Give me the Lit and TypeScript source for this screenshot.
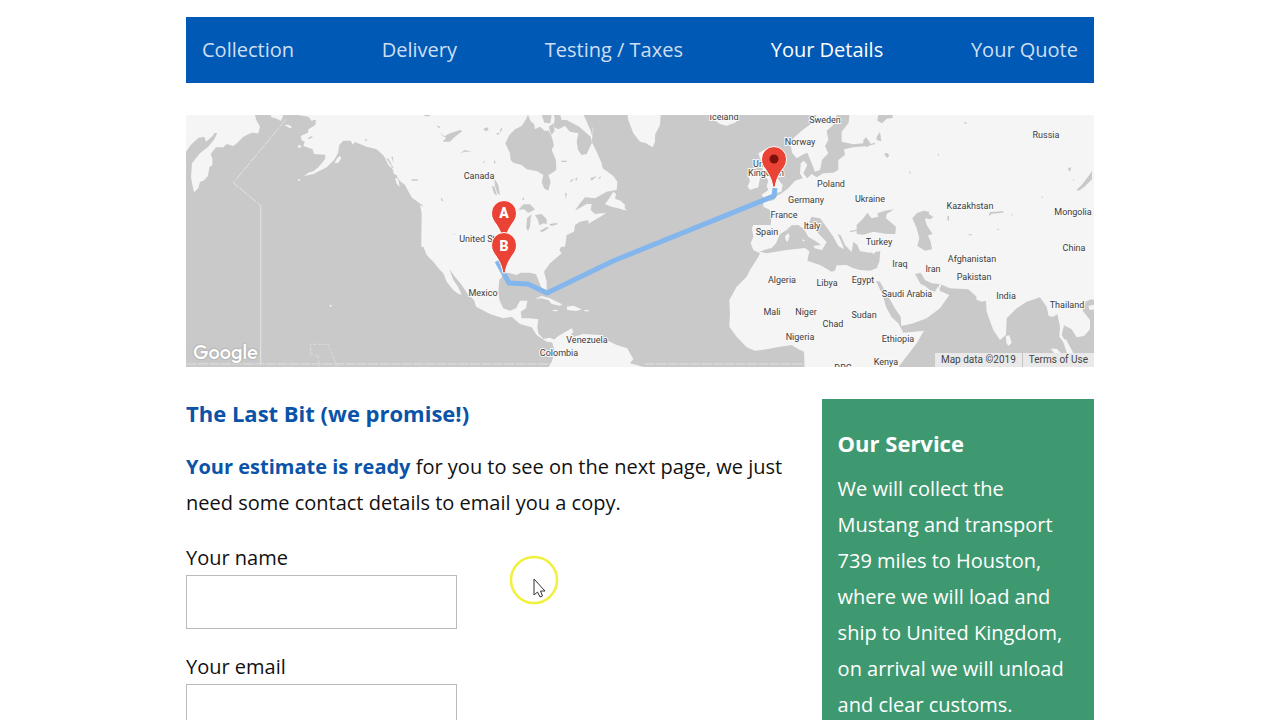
import { LitElement, html, css, svg } from "lit";
import { customElement, state } from "lit/decorators.js";
import { classMap } from "lit/directives/class-map.js";

const steps = ["Collection", "Delivery", "Testing / Taxes", "Your Details", "Your Quote"];

type Label = [text: string, x: number, y: number];

const labels: Label[] = [
  ["Canada", 293, 64], ["United States", 300, 127], ["Mexico", 297, 181],
  ["Venezuela", 401, 228], ["Colombia", 373, 241],
  ["Iceland", 538, 5], ["Sweden", 639, 8], ["Norway", 614, 30],
  ["United", 580, 52], ["Kingdom", 580, 61],
  ["Poland", 645, 72], ["Germany", 620, 88], ["France", 598, 103],
  ["Spain", 581, 120], ["Italy", 626, 114], ["Ukraine", 684, 87],
  ["Turkey", 693, 130], ["Kazakhstan", 784, 94], ["Russia", 860, 23],
  ["Mongolia", 887, 100], ["China", 888, 136], ["Algeria", 596, 168],
  ["Libya", 641, 171], ["Egypt", 677, 168], ["Iraq", 714, 152],
  ["Iran", 747, 157], ["Afghanistan", 786, 147], ["Pakistan", 788, 165],
  ["India", 820, 184], ["Saudi Arabia", 721, 182], ["Thailand", 881, 193],
  ["Mali", 586, 200], ["Niger", 620, 200], ["Sudan", 678, 203],
  ["Chad", 647, 212], ["Nigeria", 614, 225], ["Ethiopia", 712, 227],
  ["Kenya", 700, 250], ["DRC", 657, 256],
];

@customElement("route-map")
export class RouteMap extends LitElement {
  static styles = css`
    :host { display: block; position: relative; height: 252px; background: #c9c9c9; overflow: hidden; }
    .chart { display: block; width: 100%; height: 100%; }
    .land { fill: #f5f5f5; }
    .water { fill: #c9c9c9; }
    .thin { fill: none; stroke: #c9c9c9; stroke-width: 4; }
    .grid { fill: none; stroke: #dedede; stroke-width: 4; }
    .dash { fill: none; stroke: #e2e2e2; stroke-width: 3; stroke-dasharray: 30 4; }
    .faint { fill: none; stroke: #dadada; stroke-width: 3; stroke-dasharray: 10 4; }
    .route { fill: none; stroke: #84b6ee; stroke-width: 5; stroke-linejoin: round; }
    .label { font: 400 9px Roboto, sans-serif; fill: #3c3c3c; stroke: #f8f8f8; stroke-width: 2; paint-order: stroke; text-anchor: middle; }
    .pin { fill: #ea4335; stroke: #fff; stroke-width: 1; }
    .hole { fill: #7e100b; }
    .letter { font: 900 14px Roboto, sans-serif; fill: #fff; text-anchor: middle; }
    .brand { position: absolute; left: 7px; bottom: 3px; font: 500 20px/24px "Outfit", Lato, sans-serif; color: #fff; text-shadow: 0 0 2px #888; }
    .credit { position: absolute; right: 0; bottom: 0; display: flex; font: 10px/14px Roboto, sans-serif; color: #444; background: #e9e9e9; }
    .credit span, .credit a { padding: 0 6px; color: inherit; text-decoration: none; }
    .credit a { border-left: 1px solid #c4c4c4; }
  `;

  private pin(x: number, y: number, mark: unknown) {
    return svg`<g transform="translate(${x} ${y})">
      <path class="pin" d="M-1.200 0C-1.800-6-4-11-8-17C-10.500-20.500-12.500-23-12.500-28A12.500 12.500 0 0 1 12.500-28C12.500-23 10.500-20.500 8-17C4-11 1.800-6 1.200 0Z"/>
      ${mark}
    </g>`;
  }

  render() {
    return html`
      <svg class="chart" viewBox="0 0 908 252" preserveAspectRatio="xMidYMid slice" role="img" aria-label="Route map">
        <g transform="scale(.33333) translate(-18 -15)">
          <g>
            <path class="land" d="M0 0H222L228 28 240 50 235 70 215 68 190 80 172 98 160 108 140 102 130 112 108 112 92 132 97 145 97 165 88 172 84 198 70 212 60 215 55 235 42 247 36 220 33 200 36 160 60 130 85 110 103 88 112 68 103 70 98 78 78 95 73 80 55 84 32 105 20 123 0 130Z"/>
            <path class="land" d="M262 0L275 22 290 26 303 33 310 15V0ZM313 45L325 44 337 51 330 55ZM353 107l6-3 6 7-9 3ZM353 210l5-3 4 4-7 2Z"/>
            <path class="land" d="M400 0L402 22 392 30 408 30 406 45 385 58 384 68 362 78 365 90 374 96 370 108 398 118 402 132 436 134 435 148 415 172 400 184 385 188 372 198 400 192 440 172 462 150 474 130 478 105 490 92 512 92 518 104 525 96 560 110 590 118 612 138 625 165 640 180 650 200 662 215 690 235 690 250 720 275 760 320V0Z"/>
            <path class="land" d="M352 0L358 16 385 20 396 34 404 24V0Z"/>
            <path class="land" d="M463 160L472 144 480 138 484 145 475 158ZM645 203L655 208 659 230 650 222Z"/>
            <path class="thin" d="M622 145l12 20M636 140l6 18M634 168l14 12M650 182v18M694 211h24M555 88l6 3M385 86l12-6"/>
            <path class="dash" d="M318 28L160 218 240 285"/>
            <path class="grid" d="M242 285V762"/>
            <path class="dash" d="M20 762H1110"/>
            <path class="faint" d="M392 738V703H445L472 770M392 725l12 12 10-2 4 34"/>
            <circle class="land" cx="452" cy="587" r="3"/>
            <path class="dash" d="M1395 762H1872"/>
          </g>
          <g transform="translate(660)">
            <path class="land" d="M-20 0H570L572 30 580 60 575 95 590 125 605 160 608 175 640 198 652 215 650 240 620 245 585 265 555 262 540 280 525 302 560 282 575 282 572 300 585 312 618 308 605 318 575 335 566 342 565 330 540 335 525 345 522 365 500 375 495 410H64L65 310 60 285 35 262 20 235 5 205-20 190Z"/>
            <path class="land" d="M615 283L630 262 640 245 648 252 645 266 662 272 675 285 672 300 655 295 635 290Z"/>
            <path class="water" d="M316 100L328 75 345 58 365 48 378 28 384 14 392 34 402 42 405 58 420 50 434 62 446 62 455 80 462 105 455 120 468 150 469 180 455 190 445 195 452 215 445 242 432 235 425 215 430 195 410 183 380 178 365 165 340 158 332 150 330 130Z"/>
            <path class="water" d="M462 12L464 30 460 50 475 58 495 48 510 65 535 70 530 95 534 120 545 135 560 132 576 98 572 80 558 68 538 50 515 38 500 30 485 30 480 12ZM425 14l8 24 18 2 4-24ZM446 50l14-10 4 22-10 14ZM550 12l22 50 6 20V12ZM410 60l12 8-6 10-10-6Z"/>
            <path class="water" d="M118 65L130 80 150 70 180 60 187 63 165 80 150 95 128 95 138 84ZM180 130L195 120 215 125 195 125ZM283 205L295 225 300 255 292 250 285 228ZM275 228l8 2 8 26-8-4ZM250 56l12-4 4 8-10 4ZM248 158l6-8-2 10ZM70 14h20v5H75ZM365 268l6-6 2 8Z"/>
            <path class="water" d="M355 300L370 283 390 283 405 298 395 304 385 308 372 298ZM379 355L381 325 395 313 392 325 390 350 384 363ZM405 315L425 312 440 328 440 342 430 340 418 346 414 330ZM418 363L440 351 448 353 428 366ZM447 343l20-4 8 3-20 6ZM510 215l6-8 5 2-9 8ZM525 207l8-5-3 10ZM570 205l20-7-15 14ZM595 205l8-8-3 10ZM495 250h6l-4 18Z"/>
            <path class="thin" d="M30 262L68 288M35 210h18M484 154h16M124 265l4 8M162 372l4 6M112 48l8 5M290 72l8-2M305 55l-4 10M284 152v8"/>
          </g>
          <g transform="translate(660 390)">
            <path class="land" d="M64-15L68 15 80 45 100 65 120 90 130 100 140 125 160 150 172 160 185 165 175 142 160 120 148 88 165 110 185 135 205 165 222 180 228 200 270 222 310 235 335 230 360 252 395 262 410 285 440 305 462 308 466 300 450 293 430 297 415 280 412 262 415 238 390 235 365 235 362 215 378 205 382 182 360 182 348 205 330 212 310 205 298 180 295 150 298 120 310 105 325 98 350 105 362 98 390 98 408 103 415 120 425 145 440 150 440 125 432 95 450 70 485 40 478 30 490 10 495-20Z"/>
            <path class="land" d="M405 176L425 168 450 175 470 185 487 193 480 197 455 192 445 180 425 175ZM500 200L520 197 545 208 530 213 502 210ZM458 210l14-1 2 4-14 1ZM553 210h13v4h-13Z"/>
            <path class="land" d="M438 395L455 365 465 335 456 305 470 292 480 285 515 265 520 275 500 300 510 290 520 290 550 282 600 285 620 300 650 315 682 325 700 358 690 370 735 382 740 400Z"/>
          </g>
          <g transform="translate(1320)">
            <path class="land" d="M20 0L25 30 40 70 60 95 75 98 98 112 105 95 105 75 120 45 122 15V0ZM268 12L275 25 300 42 320 47 345 38 356 28 350 12ZM-5 272l14 10 2 6 9 14-16-6-9-6Z"/>
            <path class="land" d="M383 195L392 182 412 182 420 205 415 232 390 240 383 230 390 212ZM415 130L440 115 455 150 465 180 472 205 488 225 484 245 465 250 430 262 425 254 445 240 440 228 445 212 430 190 425 160Z"/>
            <path class="land" d="M590 0L588 25 575 40 545 62 520 85 512 105 516 128 530 145 552 132 562 128 575 160 585 185 600 180 606 150 625 130 615 108 625 90 620 62 640 45 655 0Z"/>
            <path class="land" d="M690 0L686 38 665 65 665 95 700 103 745 98 745 108 700 112 672 118 675 135 655 150 655 180 640 188 610 190 590 202 575 192 562 205 550 190 562 165 552 152 542 160 540 190 548 205 525 212 505 235 485 250 470 258 462 270 430 277 430 290 450 300 455 320 452 345 400 345 396 355 400 380 392 400 400 420 420 430 415 440 390 480 380 500 350 530 328 570 330 610 328 650 350 680 380 712 405 722 440 718 480 710 515 705 535 718 552 725 555 800H1500V0Z"/>
            <path class="water" d="M418 425L440 418 455 414 468 400 480 372 500 360 515 346 535 345 552 358 565 380 590 395 603 405 580 408 584 415 606 420 620 396 600 376 580 352 568 335 575 320 600 325 620 352 640 366 662 376 675 405 695 426 700 395 712 405 720 424 750 428 781 424 778 455 770 475 750 482 720 480 700 475 680 465 650 466 645 482 635 485 600 465 562 452 568 424 555 414 500 420 440 430Z"/>
            <path class="land" d="M495 378l10-8 4 8-6 18-6-6ZM545 388l12 4-8 2Z"/>
            <path class="land" d="M628 330L645 345 652 370 668 405 672 418 655 408 640 380 620 352ZM755 428l14-6-8 10Z"/>
            <path class="thin" d="M745 106l20-6M690 365l30-6"/>
          </g>
          <g transform="translate(2040)">
            <path class="water" d="M-10 345L10 325 22 308 35 325 55 320 52 310 75 302 102 298 80 312 78 325 108 350 106 372 80 372 40 365 10 374-10 372ZM157 325L170 310 190 302 208 305 206 312 220 320 212 328 195 325 200 345 218 372 204 376 212 395 216 418 195 422 172 408 178 385 170 355Z"/>
            <path class="water" d="M55 14H98L98 24 80 26 66 40 52 32ZM10 90l8-8 14 18-10 12-12-8ZM50 80l10-14 4 28-14-4ZM72 132l8-4 8 8-6 8ZM649 240L665 225 688 195 696 182V208L672 232 656 242ZM385 320l5-14 40-2v4l-35 3ZM262 318h5v14h-4ZM314 36h5v6h-5ZM232 134l5-3v7ZM147 180l6 10-4 1ZM618 186l8-12 8-2-4 14-6-8ZM412 356l8 2-8 3ZM326 373h10v3h-10ZM545 258l5 4-5 2ZM454 312l5 2-4 3ZM640 206l4 8-5-3Z"/>
          </g>
          <g transform="translate(2040 390)">
            <path class="water" d="M48 122L60 125 85 170 108 210 122 230 124 258 160 250 200 235 240 205 268 165 240 153 234 138 225 155 210 150 195 138 182 132 165 102 182 98 195 120 215 130 240 132 270 145 325 148 350 170 348 178 364 185 378 182 380 215 400 270 420 300 438 285 440 235 470 205 500 185 540 172 560 200 566 228 580 230 592 222 600 260 598 290 620 320 645 350 650 400H100L120 375 170 310 192 272 130 278 115 250 95 232 78 200 70 170Z"/>
            <path class="water" d="M605 285L612 256 635 268 650 292 672 288 690 268 690 240 668 212 678 184 695 178 740 190V400H650L640 345 620 310Z"/>
            <path class="land" d="M438 288L448 286 455 308 445 318 439 308ZM685 198l20-4v14l-16 2ZM572 326l18 0 22 22h-22ZM608 300l10-2 24 45h-20ZM237 134l8-2-8 20Z"/>
          </g>
        </g>
        ${labels.map(([text, x, y]) => svg`<text class="label" x=${x} y=${y}>${text}</text>`)}
        <path class="route" d="M311 146L323 168 342 169 361 178 427 146 588 81 589 73"/>
        ${this.pin(318, 126, svg`<text class="letter" y="-23">A</text>`)}
        ${this.pin(318, 158, svg`<text class="letter" y="-22">B</text>`)}
        ${this.pin(588, 72, svg`<circle class="hole" cy="-28" r="4.500"/>`)}
      </svg>
      <span class="brand">Google</span>
      <div class="credit"><span>Map data ©2019</span><a href="#terms">Terms of Use</a></div>
    `;
  }
}

@customElement("app-root")
export class AppRoot extends LitElement {
  static styles = css`
    :host { display: block; box-sizing: border-box; height: 100vh; overflow: hidden; position: relative; padding: 17px 186px 0; background: #fff; color: #111; font: 20px/36px "Open Sans", sans-serif; }
    .steps { display: flex; justify-content: space-between; align-items: center; height: 66px; padding: 0 16px; background: #0059b5; }
    .step { color: #cfdff1; text-decoration: none; }
    .current { color: #fff; }
    .map { margin: 32px 0; }
    .columns { display: grid; grid-template-columns: 7fr 3fr; }
    .title { margin: 0; font-size: 22px; line-height: 28px; font-weight: 700; color: #0a53a8; }
    .intro { margin: 22px 0 20px; padding-right: 32px; }
    .strong { color: #0a53a8; font-weight: 700; }
    .field { display: flex; flex-direction: column; width: 271px; margin-bottom: 21px; }
    .field label { line-height: 34px; }
    .box { box-sizing: border-box; height: 54px; border: 1px solid #bbb; border-radius: 0; padding: 0 12px; font: inherit; background: #fff; outline: none; }
    .service { background: #3f9970; color: #fff; padding: 30px 16px; }
    .service .title { color: #fff; }
    .text { margin: 14px 0; }
    .pointer { position: absolute; left: 509px; top: 555px; width: 50px; height: 50px; }
  `;

  @state() private active = 3;

  render() {
    return html`
      <nav class="steps">
        ${steps.map((s, i) => html`<a href="#step" class=${classMap({ step: true, current: i === this.active })} @click=${() => (this.active = i)}>${s}</a>`)}
      </nav>
      <route-map class="map"></route-map>
      <div class="columns">
        <main>
          <h2 class="title">The Last Bit (we promise!)</h2>
          <p class="intro"><strong class="strong">Your estimate is ready</strong> for you to see on the next page, we just need some contact details to email you a copy.</p>
          <div class="field"><label for="name">Your name</label><input class="box" id="name" type="text" /></div>
          <div class="field"><label for="email">Your email</label><input class="box" id="email" type="email" /></div>
        </main>
        <aside class="service">
          <h2 class="title">Our Service</h2>
          <p class="text">We will collect the Mustang and transport 739 miles to Houston, where we will load and ship to United Kingdom, on arrival we will unload and clear customs.</p>
        </aside>
      </div>
      <svg class="pointer" viewBox="0 0 50 50" aria-hidden="true">
        <circle cx="25" cy="25" r="23" fill="none" stroke="#f1f03a" stroke-width="2.500"/>
        <path d="M25 24V40L28.500 37 31 42 33.500 41 31.500 36H36Z" fill="#fff" stroke="#333" stroke-width="1"/>
      </svg>
    `;
  }
}
